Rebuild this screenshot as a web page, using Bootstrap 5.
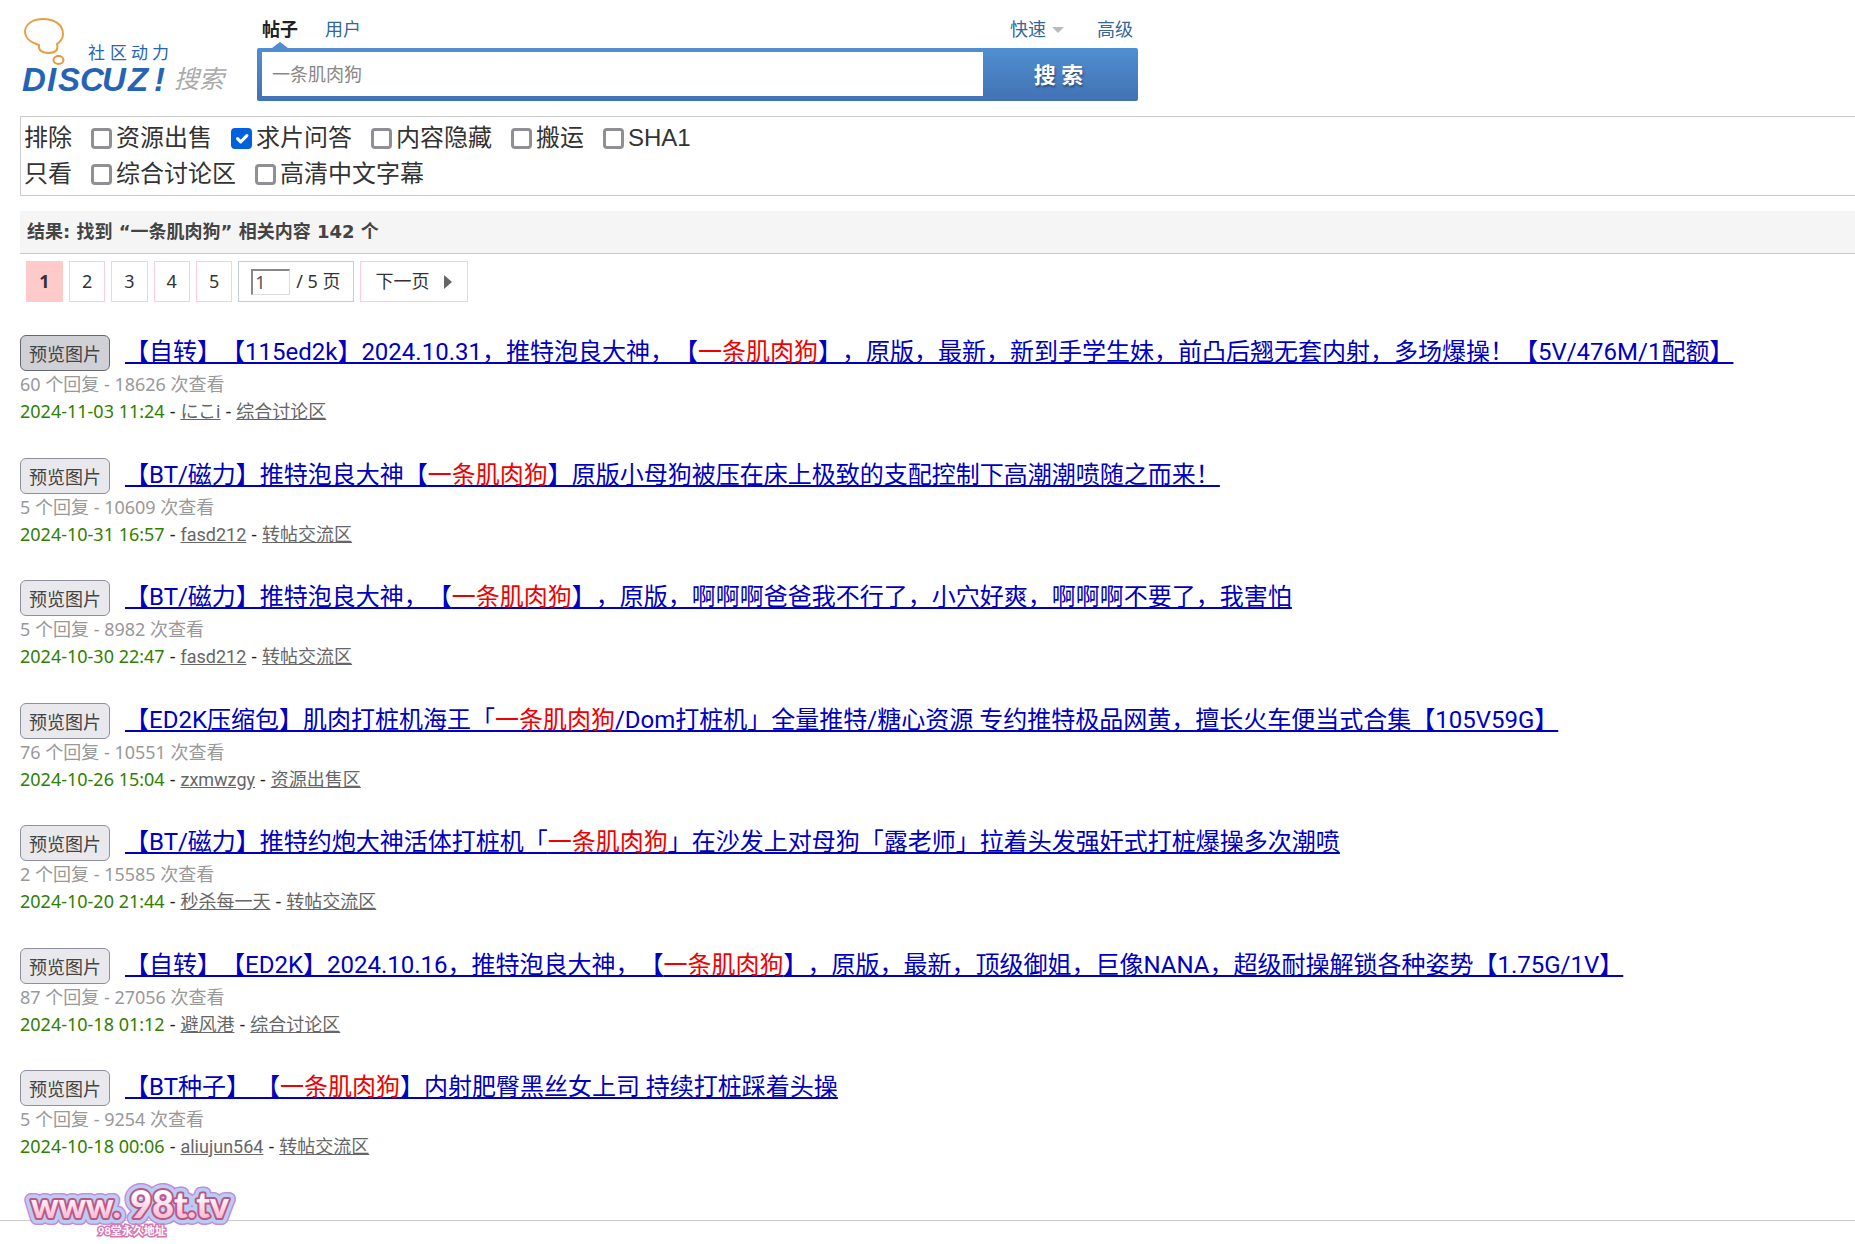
<!DOCTYPE html>
<html lang="zh-CN">
<head>
<meta charset="utf-8">
<meta name="viewport" content="width=device-width, initial-scale=1">
<title>搜索</title>
<link rel="stylesheet" href="https://cdn.jsdelivr.net/npm/bootstrap@5.3.0/dist/css/bootstrap.min.css">
<style>
body{font-family:"Noto Sans","Noto Sans CJK SC",sans-serif;font-size:18px;line-height:27px;color:#333;background:#fff;text-spacing-trim:space-all}
.page-wrap{padding-left:20px}
.site-head{height:116px}
.site-logo{width:210px;height:100px}
.search-area{width:881px;margin-left:27px;padding-top:16px}
.search-tabs{height:32px;padding:0 5px;gap:27px}
.search-tabs a{color:#369;text-decoration:none}
.search-tabs .current{color:#222;font-weight:700;position:relative}
.search-tabs .current::after{content:"";position:absolute;left:10px;top:26px;border:8px solid transparent;border-top:0;border-bottom:6px solid #4e8ccd}
.search-tabs .extra{margin-left:auto}
.drop-arrow{display:inline-block;border:6px solid transparent;border-top-color:#bbb;border-bottom:0;margin-left:6px;vertical-align:3px}
.search-tabs .extra+a{margin-left:6px}
.search-box{height:53px;padding:4px 0 5px 5px;border-radius:2px;background:linear-gradient(#508fd2,#4272b3)}
.search-box .form-control{width:auto;border:0;border-radius:0;padding:0 10px;font-size:18px;color:#888;background:#fff}
.search-box .btn{width:155px;padding:0 4px 0 0;border:0;color:#fff;font-size:22px;font-weight:700;text-shadow:1px 2px 2px #2a4f80}
.filter-box{border:1px solid #ccc;border-right:0;padding:3px;font-family:"Liberation Sans","Noto Sans CJK SC",sans-serif;font-size:24px;line-height:36px}
.filter-line{gap:19px}
.filter-line label{display:flex;align-items:center;gap:4px}
.filter-line .form-check-input{width:21px;height:21px;margin:0;border:3px solid #8f8f94;border-radius:4px;flex:none}
.filter-line .form-check-input:checked{background-color:#0061de;border-color:#0061de;background-size:20px}
.result-bar{margin:15px 0 0;padding:7px 7px 8px;background:#f5f5f5;border-bottom:1px solid #c2ccd2;font-family:"DejaVu Sans","Noto Sans CJK SC",sans-serif;font-size:18px;line-height:27px;font-weight:700;color:#444}
.pager{gap:6px;padding:7px 6px 0;margin-bottom:33px}
.pager .page-link,.pager .page-jump{height:41px;padding:6px 12px;border:1px solid #fcd;border-radius:0;color:#333;font-size:18px;line-height:27px}
.pager .page-item:not(:first-child) .page-link{margin-left:0}
.pager .page-item .page-link{min-width:36px;text-align:center;border-radius:0}
.pager .active .page-link{min-width:37px;background:#ffcaca;border-color:#ffcaca;font-weight:700}
.pager .page-jump{display:flex;align-items:center;gap:6px;border-color:#c2d0d6}
.page-jump input{width:39px;height:26px;border:1px solid #ddd;border-top:2px solid #888;border-left:2px solid #888;padding:0 2px;color:#555;border-radius:0}
.pager .next-page .page-link{display:flex;align-items:center;gap:14px;padding:6px 15px}
.next-arrow{border:7px solid transparent;border-left:8px solid #666;border-right:0}
.result-item{margin-bottom:32px}
.result-item:nth-child(odd){margin-bottom:33px}
.result-head{gap:15px;height:36px}
.result-head .btn{width:90px;height:36px;padding:2px 0 0;border:1px solid #8f8f9d;border-radius:6px;background:#e9e9ed;color:#444;font-size:18px;line-height:30px;flex:none}
.result-item:first-child .btn{background:#d0d0d7;border-color:#67676f}
.result-title,.result-meta a{font-family:Roboto,"Noto Sans CJK SC",sans-serif}
.result-title{font-size:24px;line-height:34px;font-weight:400;margin:0;white-space:nowrap}
.result-title a{color:#0000bf;text-decoration:underline 2px;text-underline-offset:2px}
.result-title b{color:#f00000;font-weight:400}
.result-stat{color:#999}
.result-meta{gap:5px;color:#222}
.result-meta time{color:#308000}
.result-meta a{color:#666}
.site-foot{position:relative;border-top:1px solid #ccc;margin-top:60px;height:22px}
.foot-mark{position:absolute;left:21px;top:-40px}
</style>
</head>
<body>
<div class="page-wrap">
<header class="site-head d-flex">
<a href="#" class="site-logo" aria-label="Discuz! 搜索">
<svg width="210" height="100" viewBox="20 0 210 100">
<path d="M39 45C29 42 25 38 25 31C26 23 34 19 43 19C55 19 63 25 63 34C63 39 60 42 57 44C59 51 54 53 48 53C42 53 38 50 39 45Z" fill="#fff" stroke="#e8a044" stroke-width="2"/>
<ellipse cx="58.500" cy="60" rx="5" ry="4" fill="#fff" stroke="#e8963a" stroke-width="2"/>
<g fill="#2463b5">
<text y="59" font-size="17" font-family="Noto Sans CJK SC"><tspan x="88">社</tspan><tspan x="110">区</tspan><tspan x="131">动</tspan><tspan x="152">力</tspan></text>
<text y="91" font-size="33" font-weight="700" font-style="italic" font-family="Liberation Sans"><tspan x="22">D</tspan><tspan x="47">I</tspan><tspan x="58">S</tspan><tspan x="80">C</tspan><tspan x="102">U</tspan><tspan x="128">Z</tspan><tspan x="154">!</tspan></text>
</g>
<text x="174" y="88" font-size="25" font-style="italic" font-family="Noto Sans CJK SC" fill="#aaa">搜索</text>
</svg>
</a>
<form class="search-area" onsubmit="return false">
<nav class="search-tabs d-flex">
<a href="#" class="current">帖子</a>
<a href="#">用户</a>
<a href="#" class="extra">快速<span class="drop-arrow"></span></a>
<a href="#">高级</a>
</nav>
<div class="search-box d-flex">
<input class="form-control flex-grow-1" type="text" value="一条肌肉狗" aria-label="搜索内容">
<button class="btn" type="submit">搜 索</button>
</div>
</form>
</header>
<section class="filter-box">
<div class="filter-line d-flex"><span>排除</span>
<label><input class="form-check-input" type="checkbox">资源出售</label>
<label><input class="form-check-input" type="checkbox" checked>求片问答</label>
<label><input class="form-check-input" type="checkbox">内容隐藏</label>
<label><input class="form-check-input" type="checkbox">搬运</label>
<label><input class="form-check-input" type="checkbox">SHA1</label></div>
<div class="filter-line d-flex"><span>只看</span>
<label><input class="form-check-input" type="checkbox">综合讨论区</label>
<label><input class="form-check-input" type="checkbox">高清中文字幕</label></div>
</section>
<main>
<h2 class="result-bar">结果: 找到 “一条肌肉狗” 相关内容 142 个</h2>
<ul class="pager pagination">
<li class="page-item active"><a class="page-link" href="#">1</a></li>
<li class="page-item"><a class="page-link" href="#">2</a></li>
<li class="page-item"><a class="page-link" href="#">3</a></li>
<li class="page-item"><a class="page-link" href="#">4</a></li>
<li class="page-item"><a class="page-link" href="#">5</a></li>
<li><label class="page-jump"><input type="text" value="1">/ 5 页</label></li>
<li class="page-item next-page"><a class="page-link" href="#">下一页<span class="next-arrow"></span></a></li>
</ul>
<ul class="list-unstyled mb-0">
<li class="result-item">
<div class="result-head d-flex"><button type="button" class="btn">预览图片</button><h3 class="result-title"><a href="#">【自转】【115ed2k】2024.10.31，推特泡良大神，【<b>一条肌肉狗</b>】，原版，最新，新到手学生妹，前凸后翘无套内射，多场爆操！【5V/476M/1配额】</a></h3></div>
<div class="result-stat">60 个回复 - 18626 次查看</div>
<div class="result-meta d-flex"><time>2024-11-03 11:24</time><span>-</span><a href="#">にこi</a><span>-</span><a href="#">综合讨论区</a></div>
</li>
<li class="result-item">
<div class="result-head d-flex"><button type="button" class="btn">预览图片</button><h3 class="result-title"><a href="#">【BT/磁力】推特泡良大神【<b>一条肌肉狗</b>】原版小母狗被压在床上极致的支配控制下高潮潮喷随之而来！</a></h3></div>
<div class="result-stat">5 个回复 - 10609 次查看</div>
<div class="result-meta d-flex"><time>2024-10-31 16:57</time><span>-</span><a href="#">fasd212</a><span>-</span><a href="#">转帖交流区</a></div>
</li>
<li class="result-item">
<div class="result-head d-flex"><button type="button" class="btn">预览图片</button><h3 class="result-title"><a href="#">【BT/磁力】推特泡良大神，【<b>一条肌肉狗</b>】，原版，啊啊啊爸爸我不行了，小穴好爽，啊啊啊不要了，我害怕</a></h3></div>
<div class="result-stat">5 个回复 - 8982 次查看</div>
<div class="result-meta d-flex"><time>2024-10-30 22:47</time><span>-</span><a href="#">fasd212</a><span>-</span><a href="#">转帖交流区</a></div>
</li>
<li class="result-item">
<div class="result-head d-flex"><button type="button" class="btn">预览图片</button><h3 class="result-title"><a href="#">【ED2K压缩包】肌肉打桩机海王「<b>一条肌肉狗</b>/Dom打桩机」全量推特/糖心资源 专约推特极品网黄，擅长火车便当式合集【105V59G】</a></h3></div>
<div class="result-stat">76 个回复 - 10551 次查看</div>
<div class="result-meta d-flex"><time>2024-10-26 15:04</time><span>-</span><a href="#">zxmwzgy</a><span>-</span><a href="#">资源出售区</a></div>
</li>
<li class="result-item">
<div class="result-head d-flex"><button type="button" class="btn">预览图片</button><h3 class="result-title"><a href="#">【BT/磁力】推特约炮大神活体打桩机「<b>一条肌肉狗</b>」在沙发上对母狗「露老师」拉着头发强奸式打桩爆操多次潮喷</a></h3></div>
<div class="result-stat">2 个回复 - 15585 次查看</div>
<div class="result-meta d-flex"><time>2024-10-20 21:44</time><span>-</span><a href="#">秒杀每一天</a><span>-</span><a href="#">转帖交流区</a></div>
</li>
<li class="result-item">
<div class="result-head d-flex"><button type="button" class="btn">预览图片</button><h3 class="result-title"><a href="#">【自转】【ED2K】2024.10.16，推特泡良大神，【<b>一条肌肉狗</b>】，原版，最新，顶级御姐，巨像NANA，超级耐操解锁各种姿势【1.75G/1V】</a></h3></div>
<div class="result-stat">87 个回复 - 27056 次查看</div>
<div class="result-meta d-flex"><time>2024-10-18 01:12</time><span>-</span><a href="#">避风港</a><span>-</span><a href="#">综合讨论区</a></div>
</li>
<li class="result-item mb-0">
<div class="result-head d-flex"><button type="button" class="btn">预览图片</button><h3 class="result-title"><a href="#">【BT种子】 【<b>一条肌肉狗</b>】内射肥臀黑丝女上司 持续打桩踩着头操</a></h3></div>
<div class="result-stat">5 个回复 - 9254 次查看</div>
<div class="result-meta d-flex"><time>2024-10-18 00:06</time><span>-</span><a href="#">aliujun564</a><span>-</span><a href="#">转帖交流区</a></div>
</li>
</ul>
</main>
</div>
<footer class="site-foot">
<svg class="foot-mark" width="224" height="62" viewBox="20 1180 224 62">
<defs><linearGradient id="pinkFill" x1="0" y1="0" x2="0" y2="1"><stop offset=".3" stop-color="#fff"/><stop offset="1" stop-color="#f9a3c4"/></linearGradient></defs>
<g font-family="Lato" font-weight="900" stroke-linejoin="round">
<g fill="none" stroke="#c38ade" stroke-width="14"><text x="30" y="1217" font-size="34">www.</text><text x="129" y="1217" font-size="38">98</text><text x="173" y="1217" font-size="36">t.tv</text></g>
<g fill="none" stroke="#b9cdf0" stroke-width="11"><text x="30" y="1217" font-size="34">www.</text><text x="129" y="1217" font-size="38">98</text><text x="173" y="1217" font-size="36">t.tv</text></g>
<g fill="url(#pinkFill)" stroke="#bd5587" stroke-width="4" paint-order="stroke"><text x="30" y="1217" font-size="34">www.</text><text x="129" y="1217" font-size="38">98</text><text x="173" y="1217" font-size="36">t.tv</text></g>
</g>
<text x="97" y="1234" font-family="Lato, Noto Sans CJK SC" font-size="11" font-weight="700" fill="#fff" stroke="#d777b1" stroke-width="3" paint-order="stroke">98堂永久地址</text>
</svg>
</footer>
<script src="https://cdn.jsdelivr.net/npm/bootstrap@5.3.0/dist/js/bootstrap.bundle.min.js"></script>
</body>
</html>
